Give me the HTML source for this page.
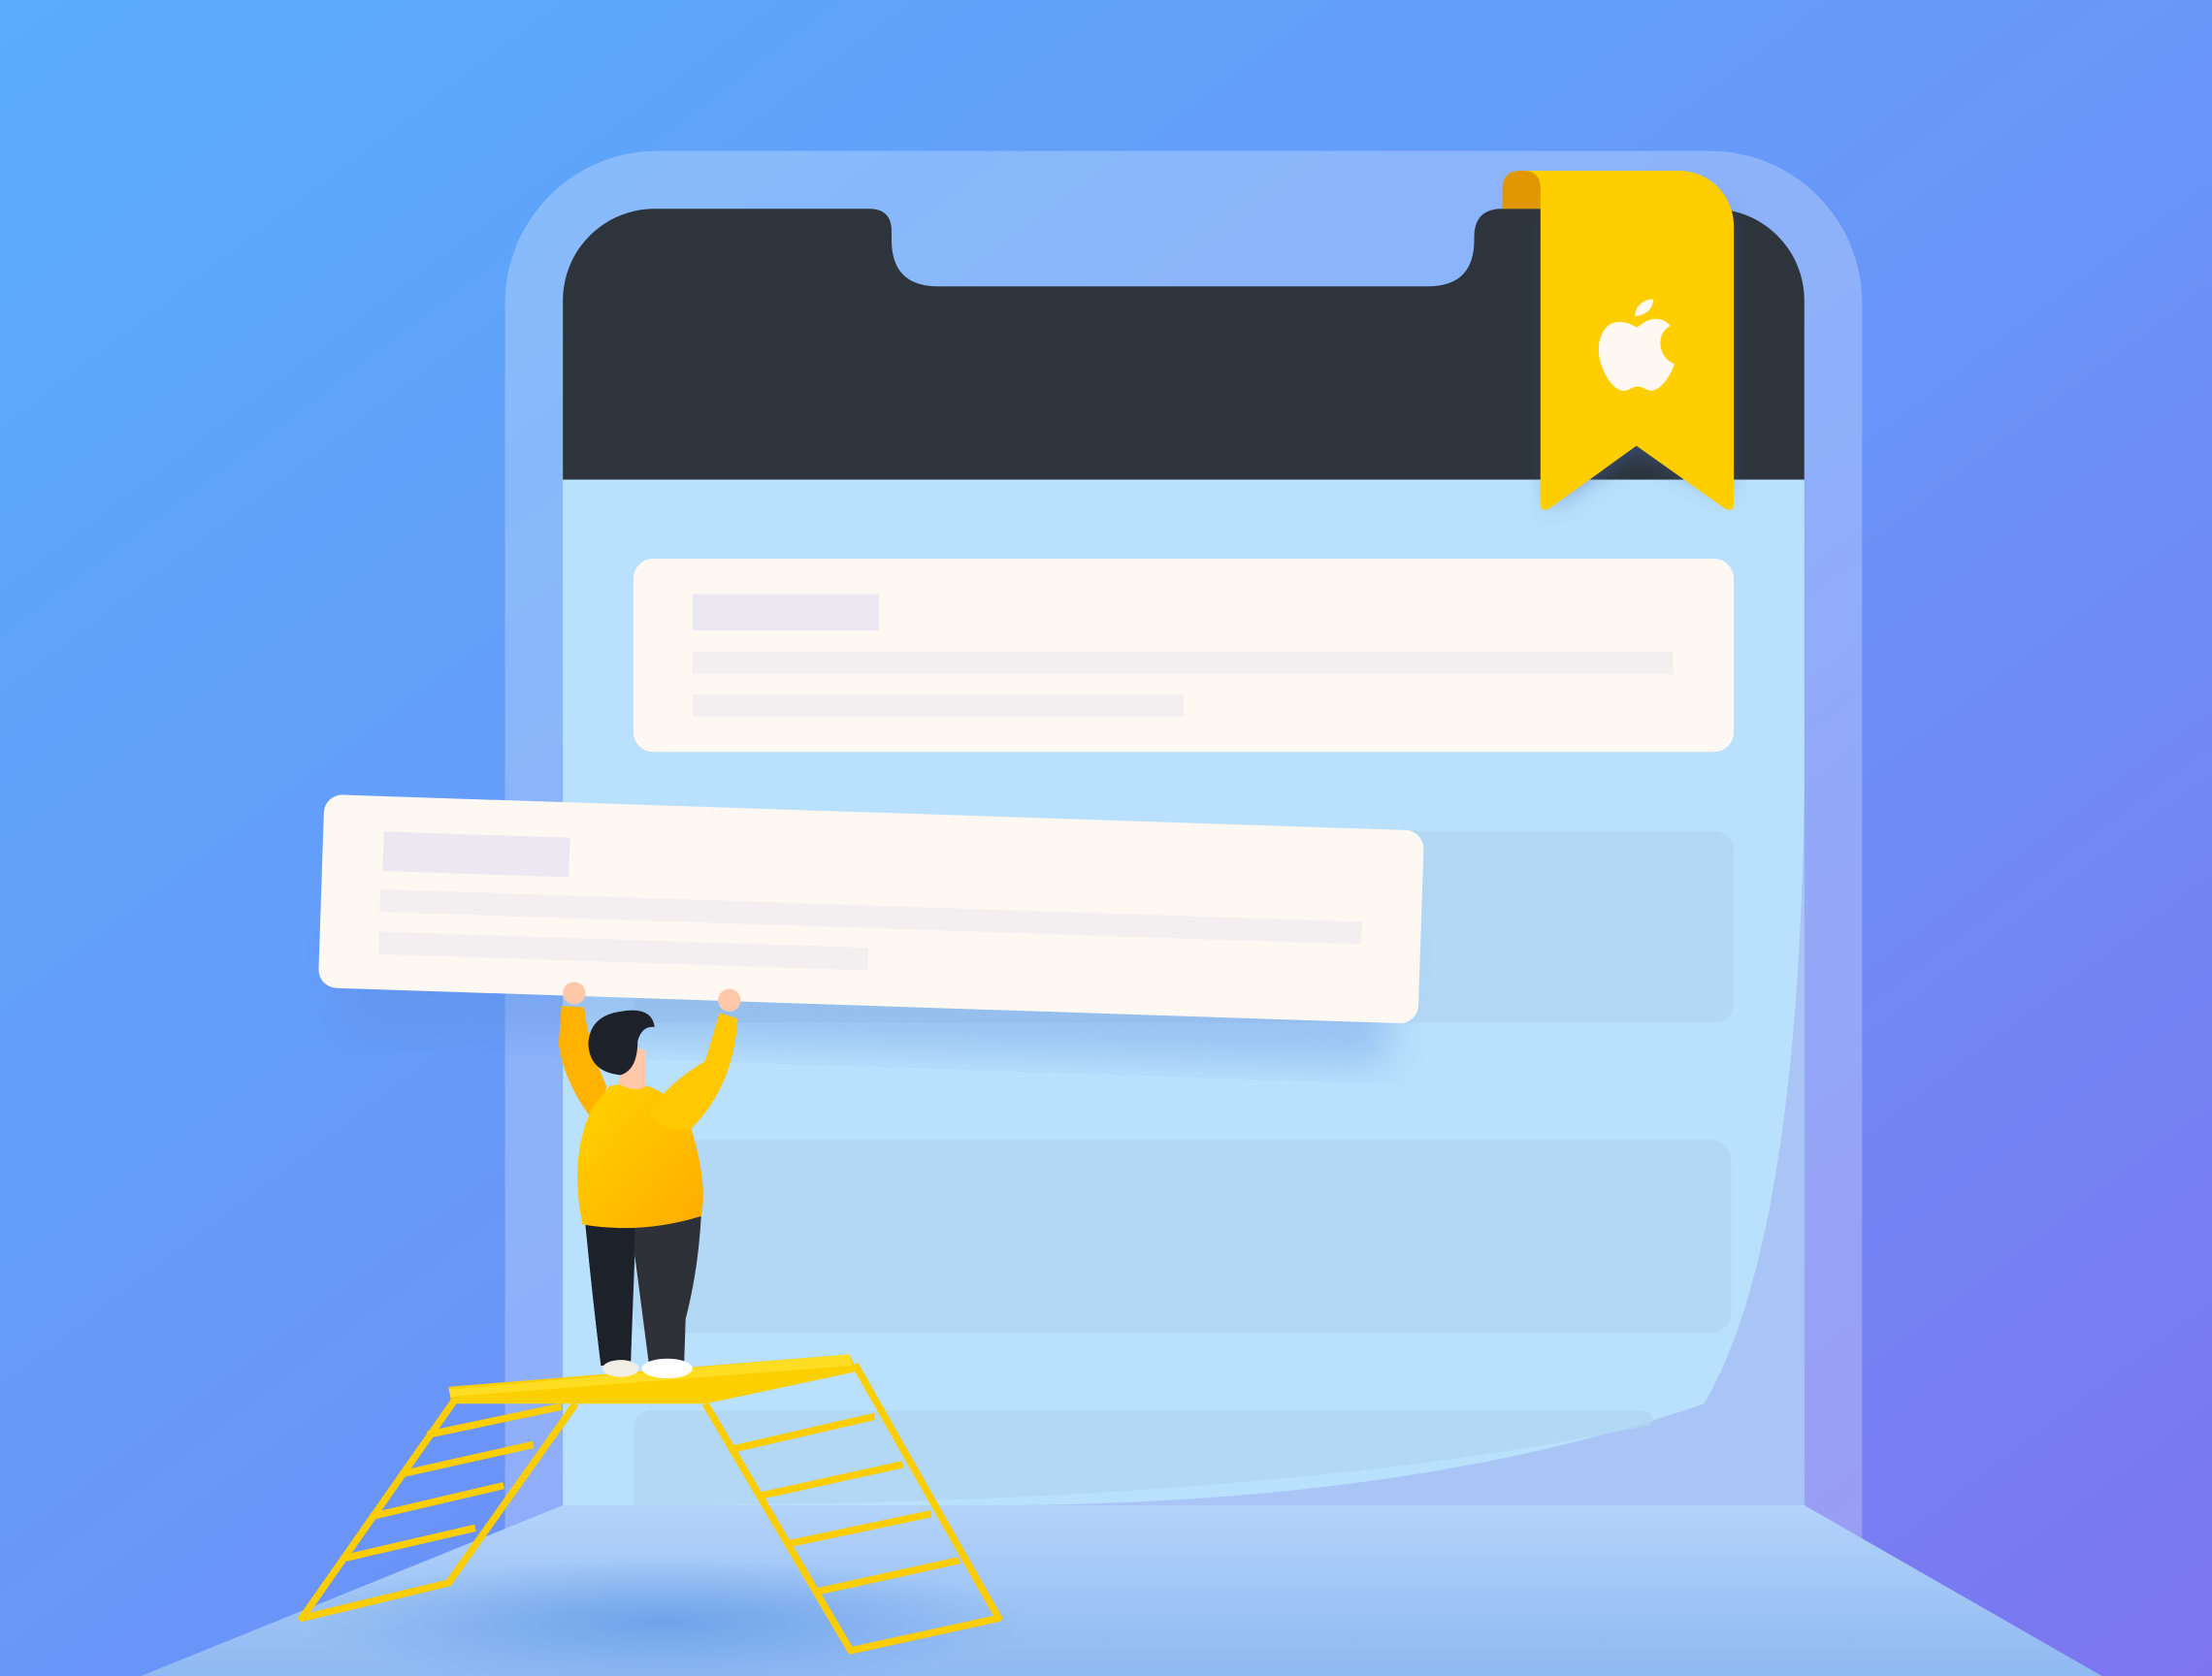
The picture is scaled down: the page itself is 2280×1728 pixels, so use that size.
<!DOCTYPE html>
<html><head><meta charset="utf-8"><style>html,body{margin:0;padding:0;overflow:hidden;background:#6f90f5}svg{display:block}</style></head>
<body>
<svg width="2280" height="1728" viewBox="0 0 1568 1188" preserveAspectRatio="none" xmlns="http://www.w3.org/2000/svg">
<defs>
<linearGradient id="bg" x1="0" y1="0" x2="1" y2="1">
<stop offset="0" stop-color="#5aacfd"/><stop offset="0.5" stop-color="#6897f8"/><stop offset="1" stop-color="#7d75ef"/></linearGradient>
<linearGradient id="floor" x1="0" y1="0" x2="0" y2="1">
<stop offset="0" stop-color="#b3d3fa"/><stop offset="1" stop-color="#8fb9f2"/></linearGradient>
<radialGradient id="shad" cx="0.5" cy="0.5" r="0.5"><stop offset="0" stop-color="#6fa3ea"/><stop offset="1" stop-color="#6fa3ea" stop-opacity="0"/></radialGradient>
<linearGradient id="shirt" x1="0" y1="0" x2="1" y2="1"><stop offset="0" stop-color="#ffd400"/><stop offset="1" stop-color="#ffac00"/></linearGradient>
<filter id="blur"><feGaussianBlur stdDeviation="14"/></filter>
<filter id="blur2"><feGaussianBlur stdDeviation="8"/></filter>
</defs>
<rect width="1568" height="1188" fill="url(#bg)"/>
<path d="M358 1188 V215 A108 108 0 0 1 466 107 H1212 A108 108 0 0 1 1320 215 V1188 Z" fill="#ffffff" fill-opacity="0.25"/>
<path d="M399 1067 H1279 L1490 1188 H100 Z" fill="url(#floor)"/>
<ellipse cx="470" cy="1150" rx="260" ry="45" fill="url(#shad)"/>
<rect x="399" y="330" width="880" height="737" fill="#b9e0fc"/>
<path d="M1279 560 Q1275 880 1208 995 Q1000 1067 700 1067 H1279 Z" fill="#9fb2f2" opacity="0.6"/>
<path d="M399 340 V213 A65 65 0 0 1 464 148 H616 Q632 148 632 164 V170 Q632 203 665 203 H1012 Q1045 203 1045 170 V168 Q1045 148 1065 148 H1214 A65 65 0 0 1 1279 213 V340 Z" fill="#2d343c"/>
<rect x="449" y="589" width="780" height="136" rx="14" fill="#b2d6f2" opacity="0.8"/>
<rect x="449" y="808" width="778" height="137" rx="14" fill="#b2d6f2" opacity="0.8"/>
<path d="M463 1000 H1160 Q1175 1000 1170 1010 Q900 1067 449 1067 V1014 Q449 1000 463 1000Z" fill="#b2d6f2" opacity="0.8"/>
<rect x="449" y="396" width="780" height="137" rx="14" fill="#fdf8f1"/>
<rect x="491" y="421" width="132" height="26" fill="#ece8f2"/>
<rect x="491" y="462" width="695" height="16" fill="#f3eeef"/>
<rect x="491" y="492" width="348" height="16" fill="#f3eeef"/>
<g transform="rotate(1.9 230 563)">
<rect x="250" y="600" width="740" height="130" rx="14" fill="#5f8fe0" opacity="0.35" filter="url(#blur)"/>
<rect x="230" y="563" width="780" height="137" rx="13" fill="#fdf8f1"/>
<rect x="273" y="588" width="132" height="28" fill="#ece8f2"/>
<rect x="272" y="629" width="696" height="16" fill="#f3eeef"/>
<rect x="272" y="659" width="347" height="16" fill="#f3eeef"/>
</g>
<g>
<path d="M1098 150 H1225 V350 L1160 318 L1098 360Z" fill="#4a6ab0" opacity="0.5" filter="url(#blur2)"/>
<path d="M1065 148 V134 Q1065 121 1078 121 H1095 V148Z" fill="#e09700"/>
<path d="M1080 121 H1190 A39 39 0 0 1 1229 160 V357 Q1229 364 1222 360 L1160 316 L1099 360 Q1092 364 1092 357 V134 Q1092 121 1080 121Z" fill="#fece00"/>
<path d="M1160 232 C1154 228 1146 227 1141 230 C1134 235 1132 245 1134 255 C1137 267 1145 278 1152 277 C1156 276 1158 274 1161 274 C1164 274 1166 276 1170 277 C1177 277 1184 267 1187 258 C1180 255 1177 249 1177 243 C1177 237 1180 233 1184 231 C1180 226 1174 225 1169 227 C1165 228 1163 231 1160 232Z M1159 224 C1159 217 1165 212 1172 212 C1172 219 1166 224 1159 224Z" fill="#fdf8f1"/>
</g>
<g stroke="#fccd00" stroke-width="5" fill="none" stroke-linejoin="round">
<path d="M324 990 L214 1147 L318 1122 L408 995"/>
<path d="M303 1017 L398 997 M284 1045 L378 1024 M263 1075 L357 1053 M242 1105 L337 1083"/>
<path d="M500 995 L603 1170 L708 1147 L606 967"/>
<path d="M520 1027 L620 1004 M540 1060 L640 1038 M560 1094 L660 1073 M580 1128 L680 1106"/>
</g>
<path d="M318 983 L602 960 L608 972 L500 995 L320 995Z" fill="#fcd000"/>
<path d="M318 985 L602 960 L604 968 L320 990Z" fill="#ffdd22"/>
<path d="M415 868 L497 862 Q495 900 486 935 L485 965 L460 967 L450 890 L447 968 L426 968 Q420 920 415 868Z" fill="#2e3238"/>
<path d="M415 868 L450 870 L447 968 L426 968 Q420 920 415 868Z" fill="#1c212a"/>
<ellipse cx="440" cy="970" rx="13" ry="6" fill="#f0eee5"/>
<ellipse cx="473" cy="970" rx="18" ry="7" fill="#ffffff"/>
<path d="M398 713 L414 714 Q418 745 430 770 L425 800 Q400 770 396 740Z" fill="#ffb300"/>
<path d="M432 770 Q470 760 490 800 Q502 840 497 862 Q455 875 413 868 Q403 820 420 785Z" fill="url(#shirt)"/>
<path d="M510 718 L523 722 Q520 770 490 800 Q470 805 460 790 Q470 770 500 752Z" fill="#ffc800"/>
<circle cx="407" cy="704" r="8" fill="#ffc8a8"/>
<circle cx="517" cy="709" r="8" fill="#ffc8a8"/>
<path d="M445 740 L458 745 L458 770 Q450 775 438 768Z" fill="#ffc8a8"/>
<path d="M440 717 Q462 713 464 728 Q455 727 452 738 Q452 758 440 762 Q418 760 417 740 Q418 720 440 717Z" fill="#1c212a"/>
</svg>
</body></html>
